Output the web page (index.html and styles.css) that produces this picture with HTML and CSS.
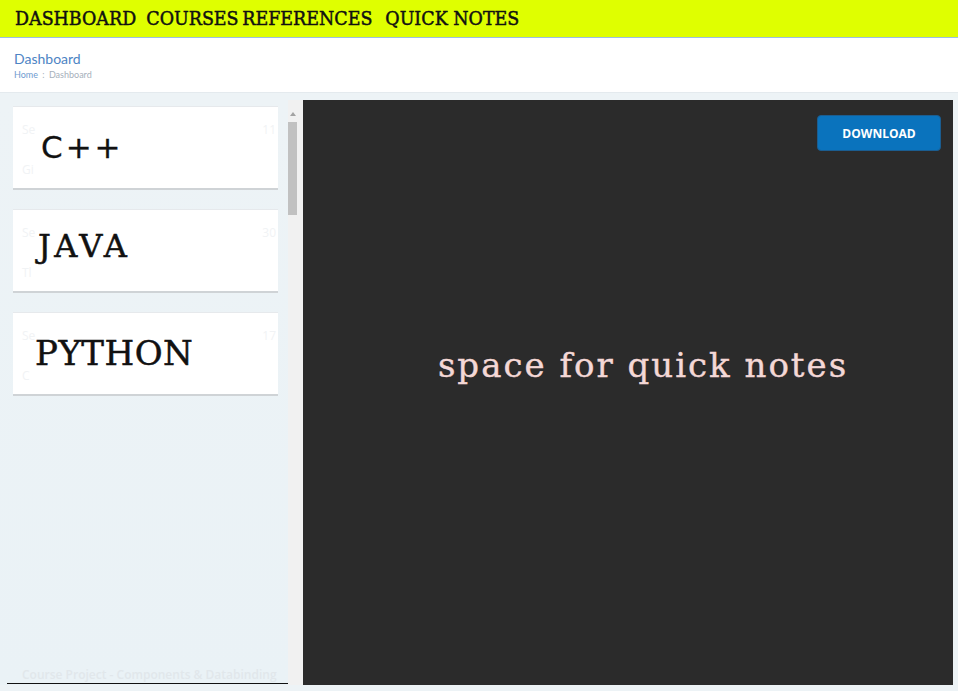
FILE: index.html
```html
<!DOCTYPE html>
<html>
<head>
<meta charset="utf-8">
<link rel="stylesheet" href="styles.css">
</head>
<body>
<header class="topbar">
  <nav class="nav">
    <span class="nav-item nav-dash">DASHBOARD</span>
    <span class="nav-item nav-courses">COURSES</span>
    <span class="nav-item nav-refs">REFERENCES</span>
    <span class="nav-item">QUICK NOTES</span>
  </nav>
</header>
<section class="pagehead">
  <div class="page-title">Dashboard</div>
  <div class="crumbs"><span class="crumb-home">Home</span> <span class="crumb-sep">:</span> <span>Dashboard</span></div>
</section>
<main class="content">
  <aside class="sidebar">
    <div class="list">
      <div class="card">
        <span class="ghost ghost-tl">Se</span><span class="ghost ghost-tr">11</span><span class="ghost ghost-bl">Gi</span>
        <span class="course course-cpp">C++</span>
      </div>
      <div class="card">
        <span class="ghost ghost-tl">Se</span><span class="ghost ghost-tr">30</span><span class="ghost ghost-bl">Tl</span>
        <span class="course course-java">JAVA</span>
      </div>
      <div class="card">
        <span class="ghost ghost-tl">Se</span><span class="ghost ghost-tr">17</span><span class="ghost ghost-bl">C</span>
        <span class="course course-python">PYTHON</span>
      </div>
      <div class="list-foot">Course Project - Components &amp; Databinding</div>
    </div>
    <div class="scrollbar">
      <div class="scroll-arrow"></div>
      <div class="scroll-thumb"></div>
    </div>
  </aside>
  <section class="notes">
    <div class="notes-bar"><button class="download">DOWNLOAD</button></div>
    <div class="notes-body"><span class="notes-text">space for quick notes</span></div>
  </section>
</main>
</body>
</html>
```
FILE: styles.css
```css
html, body {
  margin: 0;
  padding: 0;
}
body {
  width: 958px;
  height: 691px;
  overflow: hidden;
  background: #edf3f6;
  font-family: "Open Sans", sans-serif;
}
.topbar {
  height: 38px;
  background: #dfff00;
  border-bottom: 1px solid #9dbfe4;
  box-sizing: border-box;
  display: flex;
  align-items: center;
  padding-left: 15px;
}
.nav {
  display: flex;
  transform: scaleX(0.92);
  transform-origin: left center;
}
.nav-item {
  font-family: "DejaVu Serif", serif;
  font-size: 19px;
  color: #111;
  line-height: 1;
  -webkit-text-stroke: 0.5px #111;
}
.nav-dash { margin-right: 11px; }
.nav-courses { margin-right: 4px; }
.nav-refs { margin-right: 14px; }
.pagehead {
  height: 55px;
  background: #fff;
  border-bottom: 1px solid #e4eaee;
  box-sizing: border-box;
  padding: 14px 14px 0;
}
.page-title {
  font-family: "Lato", sans-serif;
  font-size: 14px;
  color: #4d84c4;
  line-height: 14px;
}
.crumbs {
  font-family: "Lato", sans-serif;
  font-size: 9px;
  color: #a6b0bb;
  margin-top: 3px;
}
.crumb-home { color: #6f9bd0; }
.crumb-sep { margin: 0 2px; }
.content {
  display: flex;
  margin-top: 7px;
  height: 585px;
}
.sidebar {
  width: 303px;
  display: flex;
  background: linear-gradient(#edf3f6, #eaf2f6);
}
.list {
  width: 288px;
  box-sizing: border-box;
  padding: 6px 10px 0 13px;
  display: flex;
  flex-direction: column;
  gap: 20px;
  position: relative;
  overflow: hidden;
  height: 584px;
}
.list::after {
  content: "";
  position: absolute;
  left: 7px;
  right: 0;
  bottom: 0;
  height: 1px;
  background: #111;
}
.card {
  height: 84px;
  background: #fff;
  border-top: 1px solid #e6e9ec;
  border-bottom: 2px solid #cfd3d6;
  box-sizing: border-box;
  position: relative;
  flex-shrink: 0;
}
.card + .card { margin-top: -1px; }
.ghost {
  position: absolute;
  font-size: 12px;
  color: #f1f3f5;
}
.ghost-tl { left: 9px; top: 14px; }
.ghost-tr { right: 2px; top: 14px; }
.ghost-bl { left: 9px; top: 54px; }
.course {
  position: absolute;
  color: #111;
  line-height: 1;
}
.course-cpp {
  font-family: "DejaVu Sans", sans-serif;
  font-size: 31px;
  left: 28px;
  top: 25px;
  letter-spacing: 3px;
  -webkit-text-stroke: 0.3px #111;
}
.course-java {
  font-family: "DejaVu Serif", serif;
  font-size: 32px;
  left: 25px;
  top: 20px;
  letter-spacing: 3.5px;
  -webkit-text-stroke: 0.5px #111;
}
.course-python {
  font-family: "DejaVu Serif", serif;
  font-size: 34px;
  left: 22px;
  top: 23px;
  letter-spacing: 0.5px;
  -webkit-text-stroke: 0.5px #111;
}
.list-foot {
  position: absolute;
  left: 22px;
  bottom: 2px;
  font-size: 12px;
  line-height: 14px;
  font-weight: 600;
  color: #e1e7eb;
  white-space: nowrap;
}
.scrollbar {
  width: 15px;
  background: #f1f1f1;
  position: relative;
}
.scroll-arrow {
  position: absolute;
  left: 2px;
  top: 12px;
  width: 0;
  height: 0;
  border-left: 3px solid transparent;
  border-right: 3px solid transparent;
  border-bottom: 4px solid #a3a3a3;
}
.scroll-thumb {
  position: absolute;
  left: 0;
  top: 22px;
  width: 9px;
  height: 93px;
  background: #c1c1c1;
}
.notes {
  width: 650px;
  background: #2b2b2b;
  display: flex;
  flex-direction: column;
}
.notes-bar {
  display: flex;
  justify-content: flex-end;
  padding: 15px 12px 0 0;
}
.download {
  width: 124px;
  height: 36px;
  background: #0a73bd;
  border: 1px solid #1b5d90;
  border-radius: 4px;
  color: #fff;
  font-family: "Open Sans", sans-serif;
  font-weight: 700;
  font-size: 12px;
  padding: 0;
}
.notes-body {
  flex: 1;
  display: flex;
  justify-content: center;
  padding-top: 197px;
  padding-left: 30px;
}
.notes-text {
  font-family: "DejaVu Serif", serif;
  font-size: 34px;
  color: #f4d8d6;
  letter-spacing: 2px;
  line-height: 1;
  height: 34px;
  -webkit-text-stroke: 0.4px #f4d8d6;
}
```
